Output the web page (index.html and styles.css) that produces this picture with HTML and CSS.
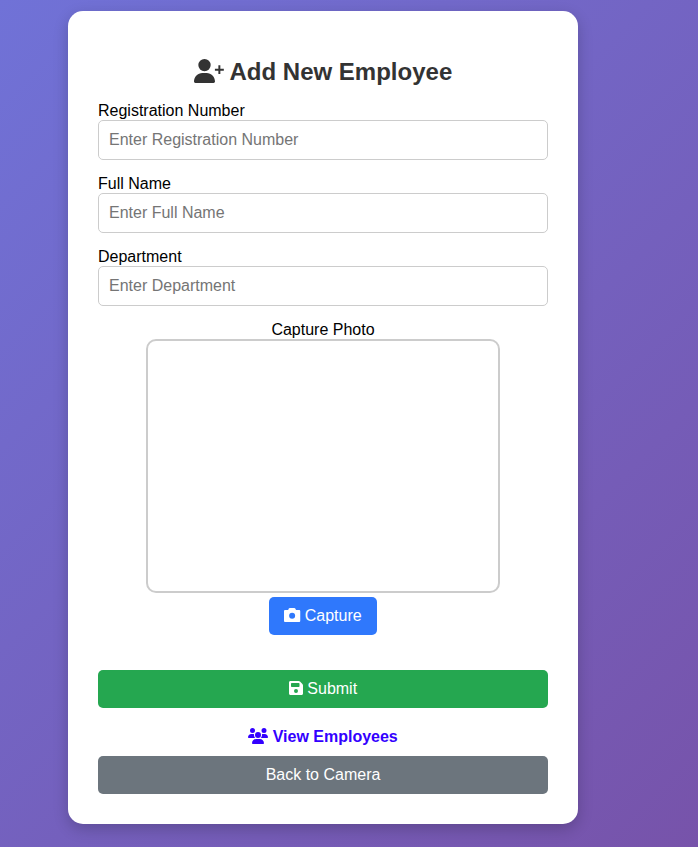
FILE: index.html
```html
<!DOCTYPE html>
<html lang="en">
<head>
<meta charset="utf-8">
<title>Add New Employee</title>
<link rel="stylesheet" href="styles.css">
</head>
<body>
<main class="card">
  <h2 class="title"><svg class="icon icon-wide" viewBox="0 0 640 512"><path d="M92 130a132 132 0 1 1 264 0A132 132 0 1 1 92 130zM0 482.3C0 383.8 79.8 298 178.3 298l91.4 0C368.2 298 448 383.8 448 482.3c0 16.4-13.3 29.7-29.7 29.7L29.7 512C13.3 512 0 498.7 0 482.3zM520 132h42v74h74v42h-74v74h-42v-74h-74v-42h74z"/></svg> Add New Employee</h2>
  <form>
    <div class="field">
      <label for="reg">Registration Number</label>
      <input id="reg" type="text" placeholder="Enter Registration Number">
    </div>
    <div class="field">
      <label for="name">Full Name</label>
      <input id="name" type="text" placeholder="Enter Full Name">
    </div>
    <div class="field">
      <label for="dept">Department</label>
      <input id="dept" type="text" placeholder="Enter Department">
    </div>
    <div class="capture">
      <label>Capture Photo</label>
      <div class="video"></div>
      <button type="button" class="btn btn-capture"><svg class="icon" viewBox="0 0 512 512"><path d="M149.1 58L134 92 40 92C16 92 0 108 0 132L0 440c0 24 16 40 40 40l440 0c24 0 40-16 40-40l0-308c0-24-16-40-40-40l-96 0L366 58C360 40 345 28 326 28L189 28c-19 0-34 12-39.9 30zM260 184a96 96 0 1 1 0 192 96 96 0 1 1 0-192z"/></svg> Capture</button>
    </div>
    <button type="button" class="btn btn-submit"><svg class="icon icon-narrow" viewBox="0 0 448 512"><path d="M48 32C20 32 0 52 0 80L0 432c0 28 20 48 48 48l352 0c28 0 48-20 48-48l0-258.7c0-17-6.7-33.3-18.7-45.3L352 50.7C340 38.7 323.7 32 306.7 32L48 32zm16 88c0-14 10-24 24-24l224 0c14 0 24 10 24 24l0 80c0 14-10 24-24 24L88 224c-14 0-24-10-24-24l0-80zM224 288a64 64 0 1 1 0 128 64 64 0 1 1 0-128z"/></svg> Submit</button>
  </form>
  <a class="link"><svg class="icon icon-wide" viewBox="0 0 640 512"><path d="M144 0a80 80 0 1 1 0 160A80 80 0 1 1 144 0zM512 0a80 80 0 1 1 0 160A80 80 0 1 1 512 0zM0 298.7C0 239.8 47.8 192 106.7 192l42.7 0c15.9 0 31 3.5 44.6 9.7c-1.3 7.2-1.9 14.7-1.9 22.3c0 38.2 16.8 72.5 43.3 96c-.2 0-.4 0-.7 0L21.3 320C9.6 320 0 310.4 0 298.7zM405.3 320c-.2 0-.4 0-.7 0c26.6-23.5 43.3-57.8 43.3-96c0-7.6-.7-15-1.9-22.3c13.6-6.3 28.7-9.7 44.6-9.7l42.7 0C592.2 192 640 239.8 640 298.7c0 11.8-9.6 21.3-21.3 21.3l-213.3 0zM224 224a96 96 0 1 1 192 0 96 96 0 1 1 -192 0zM128 485.3C128 411.7 187.7 352 261.3 352l117.3 0C452.3 352 512 411.7 512 485.3c0 14.7-11.9 26.7-26.7 26.7l-330.7 0c-14.7 0-26.7-11.9-26.7-26.7z"/></svg> View Employees</a>
  <button type="button" class="btn btn-back">Back to Camera</button>
</main>
</body>
</html>
```
FILE: styles.css
```css
* { box-sizing: border-box; }
html { height: 100%; }
body {
  margin: 0;
  height: 847px;
  padding: 11px 0 0 68px;
  overflow: hidden;
  font: 16px/18px "Liberation Sans", Arial, sans-serif;
  color: #000;
  background: linear-gradient(135deg, #7072d7, #7753aa);
}
.card {
  width: 510px;
  height: 813px;
  padding: 46px 30px 30px;
  background: #fff;
  border-radius: 15px;
  box-shadow: 0 5px 15px rgba(0, 0, 0, 0.2);
}
.title {
  margin: 0 0 15px;
  font-size: 24px;
  line-height: 30px;
  text-align: center;
  color: #333;
}
.icon {
  width: 1em;
  height: 1em;
  fill: currentColor;
  vertical-align: -0.125em;
  overflow: visible;
}
.icon-wide { width: 1.25em; }
.icon-narrow { width: 0.875em; }
.field { margin-bottom: 15px; }
label { display: block; }
input {
  display: block;
  width: 100%;
  height: 40px;
  padding: 0 10px;
  border: 1px solid #ccc;
  border-radius: 5px;
  font: inherit;
  background: #fff;
}
input::placeholder { color: #757575; }
.capture {
  display: flex;
  flex-direction: column;
  align-items: center;
  margin-bottom: 35px;
}
.video {
  width: 354px;
  height: 254px;
  margin-bottom: 4px;
  border: 2px solid #ccc;
  border-radius: 10px;
}
.btn {
  display: block;
  height: 38px;
  padding: 0 15px;
  border: 0;
  border-radius: 5px;
  font: inherit;
  color: #fff;
}
.btn-capture { background: #2f78fc; }
.btn-submit { width: 100%; background: #25a750; }
.btn-back { width: 100%; background: #6c757d; }
.link {
  display: block;
  margin: 20px 0 10px;
  text-align: center;
  font-weight: bold;
  color: #30f;
}
```
